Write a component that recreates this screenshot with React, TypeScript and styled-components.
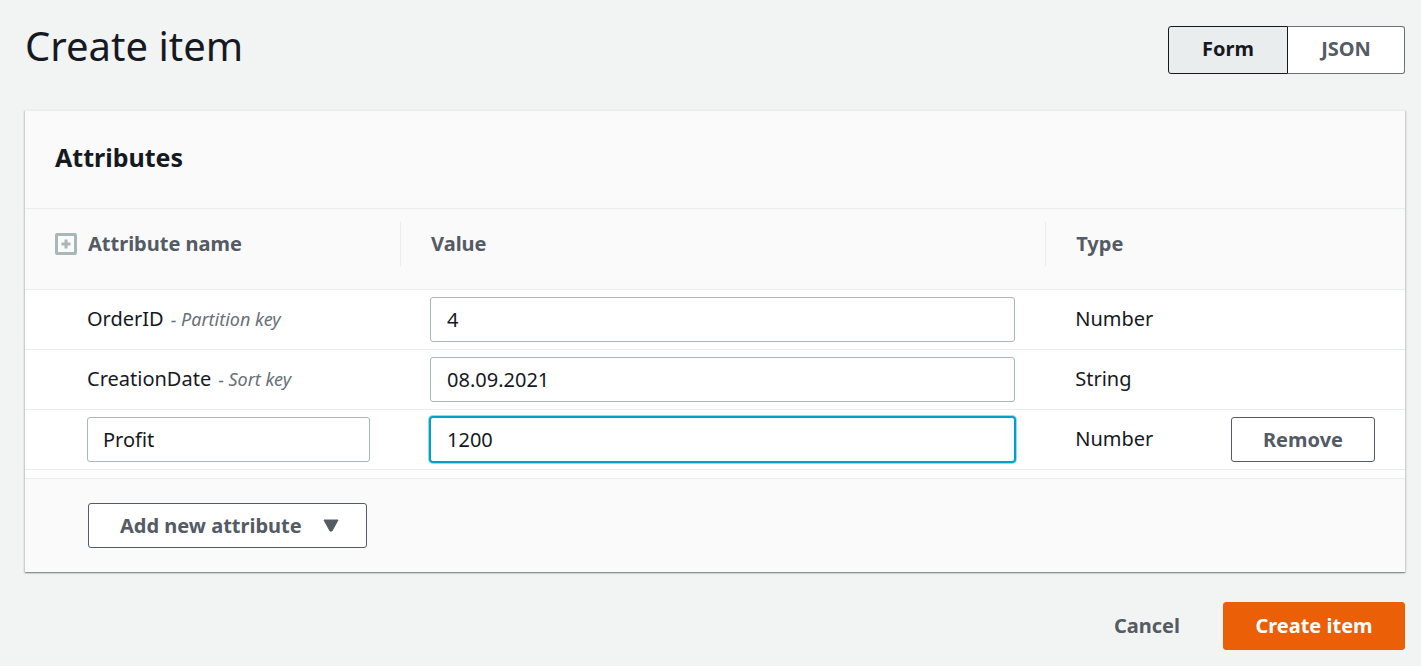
import React, { useState } from "react";
import styled, { createGlobalStyle, css } from "styled-components";

const GlobalStyle = createGlobalStyle`
  *, *::before, *::after { box-sizing: border-box; }
  body {
    margin: 0;
    background: #f2f3f3;
    color: #16191f;
    font-family: "Noto Sans", "Open Sans", sans-serif;
    font-size: 20px;
    line-height: 30px;
  }
  button, input { font: inherit; color: inherit; }
`;

const Page = styled.form`
  padding: 26px 16px 16px 25px;
`;

const TopBar = styled.header`
  display: flex;
  justify-content: space-between;
  align-items: flex-start;
  margin-bottom: 36px;
`;

const Title = styled.h1`
  margin: 0;
  font-size: 40px;
  line-height: 40px;
  font-weight: 400;
`;

const Segments = styled.div`
  display: flex;
`;

const Segment = styled.button<{ $selected?: boolean }>`
  height: 48px;
  width: 117px;
  padding: 0 0 2px;
  border: 1px solid #687078;
  border-left: 0;
  border-radius: 0 3px 3px 0;
  background: #fff;
  color: #545b64;
  font-weight: 700;
  ${(p) =>
    p.$selected &&
    css`
      width: 120px;
      border: 1px solid #16191f;
      border-radius: 3px 0 0 3px;
      background: #eaeded;
      color: #16191f;
    `}
`;

const Card = styled.section`
  background: #fafafa;
  border-top: 1px solid #eaeded;
  box-shadow: 0 1px 1px 0 rgba(0, 28, 36, 0.3), 1px 1px 2px 0 rgba(0, 28, 36, 0.15),
    -1px 1px 2px 0 rgba(0, 28, 36, 0.15);
`;

const CardHeader = styled.div`
  padding: 28px 30px 33px;
  border-bottom: 1px solid #eaeded;
`;

const CardTitle = styled.h2`
  margin: 0;
  font-size: 25px;
  line-height: 36px;
  font-weight: 700;
`;

const TableArea = styled.div`
  padding-bottom: 8px;
  background: #fff;
`;

const Table = styled.table`
  width: 100%;
  table-layout: fixed;
  border-collapse: separate;
  border-spacing: 0;
`;

const NameCol = styled.col`
  width: 27.25%;
`;
const ValueCol = styled.col`
  width: 46.75%;
`;
const ActionCol = styled.col`
  width: 204px;
`;

const HeadCell = styled.th`
  padding: 13px 0 23px;
  border-bottom: 1px solid #eaeded;
  background: #fafafa;
  color: #545b64;
  font-weight: 700;
  text-align: left;
`;

const HeadLabel = styled.div<{ $divided?: boolean }>`
  display: flex;
  align-items: center;
  gap: 11px;
  height: 44px;
  padding-left: 30px;
  border-right: ${(p) => (p.$divided ? "1px solid #eaeded" : "0")};
`;

const Cell = styled.td<{ $text?: boolean }>`
  height: 60px;
  padding: ${(p) => (p.$text ? "6px 31px 8px 29px" : "7px 31px 7px 29px")};
  border-bottom: 1px solid #eaeded;
  vertical-align: middle;
  white-space: nowrap;
`;

const NameCell = styled(Cell)`
  padding-left: 62px;
`;

const ActionCell = styled(Cell)`
  padding-right: 30px;
  padding-left: 0;
  text-align: right;
`;

const KeyHint = styled.em`
  margin-left: 7px;
  color: #687078;
  font-size: 18px;
  line-height: 20px;
`;

const TextInput = styled.input<{ $active?: boolean }>`
  display: block;
  width: 100%;
  height: 45px;
  padding: 0 16px;
  border: 1px solid #aab7b8;
  border-radius: 3px;
  background: #fff;
  outline: none;
  ${(p) =>
    p.$active &&
    css`
      border-color: #00a1c9;
      box-shadow: 0 0 0 1px #00a1c9, 0 0 0 2px rgba(0, 161, 201, 0.4);
    `}
`;

const NameInput = styled(TextInput)`
  padding: 0 15px;
`;

const Button = styled.button`
  display: inline-flex;
  align-items: center;
  justify-content: center;
  height: 45px;
  padding: 0 31px;
  border: 1px solid #545b64;
  border-radius: 3px;
  background: #fff;
  color: #545b64;
  font-weight: 700;
  vertical-align: top;
`;

const RemoveButton = styled(Button)`
  width: 144px;
`;

const AddButton = styled(Button)`
  gap: 21px;
  padding: 0 27px 0 31px;
`;

const PlainButton = styled(Button)`
  height: 48px;
  border-color: transparent;
  background: transparent;
`;

const PrimaryButton = styled(Button)`
  height: 48px;
  width: 182px;
  border-color: #eb5f07;
  background: #eb5f07;
  color: #fff;
`;

const CardFooter = styled.div`
  padding: 24px 30px 24px 63px;
  border-top: 1px solid #eaeded;
`;

const Actions = styled.footer`
  display: flex;
  justify-content: flex-end;
  gap: 11px;
  margin-top: 30px;
`;

const ExpandIcon = () => (
  <svg width="22" height="22" viewBox="0 0 22 22" aria-hidden="true">
    <rect x="1.5" y="1.5" width="19" height="19" rx="0.5" fill="none" stroke="#aab7b8" strokeWidth="3" />
    <path d="M11 6.5v9M6.5 11h9" stroke="#aab7b8" strokeWidth="3" />
  </svg>
);

const CaretIcon = () => (
  <svg width="16" height="13" viewBox="0 0 16 13" aria-hidden="true">
    <path d="M1 1h14L9 12H7z" fill="#545b64" stroke="#545b64" strokeWidth="1" strokeLinejoin="round" />
  </svg>
);

export default function App() {
  const [orderId, setOrderId] = useState("4");
  const [created, setCreated] = useState("08.09.2021");
  const [name, setName] = useState("Profit");
  const [value, setValue] = useState("1200");

  return (
    <>
      <GlobalStyle />
      <Page onSubmit={(e) => e.preventDefault()}>
        <TopBar>
          <Title>Create item</Title>
          <Segments role="group" aria-label="Editor mode">
            <Segment type="button" $selected aria-pressed="true">Form</Segment>
            <Segment type="button" aria-pressed="false">JSON</Segment>
          </Segments>
        </TopBar>

        <Card>
          <CardHeader>
            <CardTitle>Attributes</CardTitle>
          </CardHeader>
          <TableArea>
            <Table>
              <colgroup>
                <NameCol />
                <ValueCol />
                <col />
                <ActionCol />
              </colgroup>
              <thead>
                <tr>
                  <HeadCell scope="col">
                    <HeadLabel $divided>
                      <ExpandIcon />
                      Attribute name
                    </HeadLabel>
                  </HeadCell>
                  <HeadCell scope="col">
                    <HeadLabel $divided>Value</HeadLabel>
                  </HeadCell>
                  <HeadCell scope="col" colSpan={2}>
                    <HeadLabel>Type</HeadLabel>
                  </HeadCell>
                </tr>
              </thead>
              <tbody>
                <tr>
                  <NameCell $text>
                    <label htmlFor="order-id">OrderID</label>
                    <KeyHint>- Partition key</KeyHint>
                  </NameCell>
                  <Cell>
                    <TextInput id="order-id" value={orderId} onChange={(e) => setOrderId(e.target.value)} />
                  </Cell>
                  <Cell $text>Number</Cell>
                  <ActionCell />
                </tr>
                <tr>
                  <NameCell $text>
                    <label htmlFor="creation-date">CreationDate</label>
                    <KeyHint>- Sort key</KeyHint>
                  </NameCell>
                  <Cell>
                    <TextInput id="creation-date" value={created} onChange={(e) => setCreated(e.target.value)} />
                  </Cell>
                  <Cell $text>String</Cell>
                  <ActionCell />
                </tr>
                <tr>
                  <NameCell>
                    <NameInput aria-label="Attribute name" value={name} onChange={(e) => setName(e.target.value)} />
                  </NameCell>
                  <Cell>
                    <TextInput $active aria-label="Value" value={value} onChange={(e) => setValue(e.target.value)} />
                  </Cell>
                  <Cell $text>Number</Cell>
                  <ActionCell>
                    <RemoveButton type="button">Remove</RemoveButton>
                  </ActionCell>
                </tr>
              </tbody>
            </Table>
          </TableArea>
          <CardFooter>
            <AddButton type="button" aria-haspopup="menu">
              Add new attribute
              <CaretIcon />
            </AddButton>
          </CardFooter>
        </Card>

        <Actions>
          <PlainButton type="button">Cancel</PlainButton>
          <PrimaryButton type="submit">Create item</PrimaryButton>
        </Actions>
      </Page>
    </>
  );
}
